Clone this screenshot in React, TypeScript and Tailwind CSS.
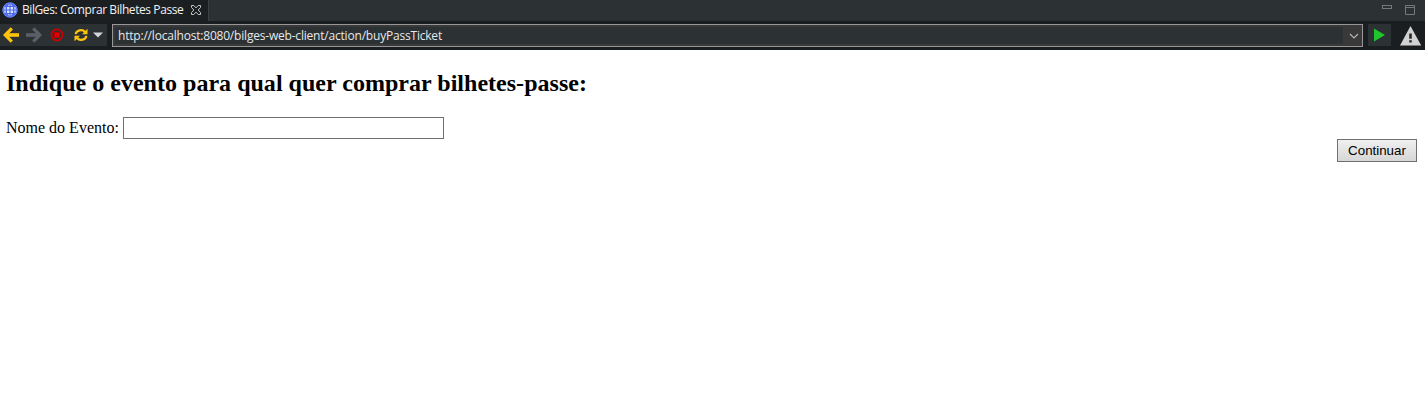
import React from "react";

function GlobeIcon() {
  return (
    <svg width="16" height="16" viewBox="0 0 16 16" className="shrink-0">
      <circle cx="8" cy="8" r="7.5" fill="#4c69ee" />
      <g fill="#d9e3ff">
        <path d="M5 5h2.400v2.400H5zM8.600 5H11v2.400H8.600zM5 8.600h2.400V11H5zM8.600 8.600H11V11H8.600z" />
        <path d="M5.500 3.800 7.400 2v1.800zM10.500 3.800 8.600 2v1.800zM5.500 12.200 7.400 14v-1.800zM10.500 12.200 8.600 14v-1.800z" />
      </g>
      <g fill="#a9bdfb">
        <path d="M2.400 5h1.500v2.400H1.800zM13.600 5h-1.500v2.400h2.100zM2.400 11h1.500V8.600H1.800zM13.600 11h-1.500V8.600h2.100z" />
      </g>
      <circle cx="8" cy="8" r="7.100" fill="none" stroke="#6d88f8" strokeWidth="1" />
    </svg>
  );
}

function CloseIcon() {
  return (
    <svg width="12" height="12" viewBox="0 0 12 12" className="shrink-0" fill="none" stroke="#c4c7c9" strokeWidth="1">
      <path d="M1.500 1.500h2.300L6 3.900l2.200-2.400h2.300v2L8.100 6l2.400 2.500v2H8.200L6 8.100l-2.200 2.400H1.500v-2L3.900 6 1.500 3.500z" />
    </svg>
  );
}

function Arrow({ className }: { className: string }) {
  return (
    <svg width="16" height="16" viewBox="0 0 16 16" className={className} fill="none" stroke="currentColor">
      <path d="M8.800 1.400 2.200 8l6.600 6.600" strokeWidth="3.200" />
      <path d="M2.500 8H16" strokeWidth="3.600" />
    </svg>
  );
}

function StopIcon() {
  return (
    <svg width="14" height="14" viewBox="0 0 14 14">
      <circle cx="7" cy="7" r="5.600" fill="none" stroke="#cc0000" strokeWidth="1.700" />
      <rect x="4" y="4" width="6" height="6" fill="#b80000" />
      <rect x="5" y="5" width="4" height="4" fill="#e60000" />
    </svg>
  );
}

function RefreshIcon() {
  return (
    <svg width="14" height="14" viewBox="0 0 14 14" fill="#fdc30a">
      <path d="M1.700 6.200C2.200 2 8.500.8 11 4M12.300 7.800C11.800 12 5.500 13.200 3 10" fill="none" stroke="#fdc30a" strokeWidth="2.200" />
      <path d="M13.500.7v5.600H8zM.5 13.300V7.700H6z" />
    </svg>
  );
}

function TabBar() {
  return (
    <div className="flex h-[21px] bg-[#2c3134]">
      <div className="flex h-[21px] w-[209px] items-center border-r border-[#3b4043] bg-[#1b1f22] pb-px pl-[2px]">
        <GlobeIcon />
        <span className="ml-1 w-[168px] whitespace-nowrap text-[12px] leading-[20px] tracking-[-0.42px] text-[#f2f2f2]">
          BilGes: Comprar Bilhetes Passe
        </span>
        <CloseIcon />
      </div>
      <div className="ml-auto flex pr-[9px]">
        <svg width="34" height="20" viewBox="0 0 34 20" fill="none" stroke="#74797c">
          <rect x=".5" y="5.500" width="9" height="3" />
          <path d="M23.500 5.500h9v9h-9zM23.500 7.500h9" />
        </svg>
      </div>
    </div>
  );
}

function Toolbar() {
  return (
    <div className="flex h-[29px] bg-[#1b1e20] pt-[3px]">
      <div className="flex h-[22px] w-[107px] items-center bg-[#2c3134] pl-[3px]">
        <Arrow className="text-[#ffc40a]" />
        <Arrow className="ml-[7px] rotate-180 text-[#5a5f68]" />
        <span className="ml-2"><StopIcon /></span>
        <span className="ml-[10px]"><RefreshIcon /></span>
        <svg width="10" height="6" viewBox="0 0 10 6" className="ml-[5px]">
          <path d="M0 .5h10L5 5.500z" fill="#d2d5d8" />
        </svg>
      </div>
      <div className="ml-[5px] flex h-[23px] w-[1251px] items-center border border-[#979797] bg-[#393939] p-[2px]">
        <div className="flex h-[17px] flex-1 items-center bg-[#2c3134] pl-[3px]">
          <span className="whitespace-nowrap text-[12px] leading-[17px] tracking-[-0.2px] text-[#e8e8e8]">
            http://localhost:8080/bilges-web-client/action/buyPassTicket
          </span>
        </div>
        <svg width="17" height="17" viewBox="0 0 17 17" fill="none" stroke="#b4b4b4" strokeWidth="1.200">
          <path d="m7 7 4 4 4-4" />
        </svg>
      </div>
      <div className="ml-[5px] flex h-[22px] w-[23px] items-center bg-[#2c3134] pl-[6px]">
        <svg width="11" height="14" viewBox="0 0 11 14">
          <path d="M0 .5 11 7 0 13.500z" fill="#20c42c" />
        </svg>
      </div>
      <svg width="22" height="20" viewBox="0 0 22 20" className="ml-[9px] mt-[2px]">
        <path d="M10.500 0 21.200 19.500H0z" fill="#d2d2d2" />
        <path d="M9.200 7.500h2.600v5.300H9.200zM9.200 14.200h2.600v2.300H9.200z" fill="#24282b" />
      </svg>
    </div>
  );
}

export default function App() {
  return (
    <div className="flex h-[416px] w-[1425px] flex-col overflow-hidden bg-white font-['Open_Sans',sans-serif]">
      <TabBar />
      <Toolbar />
      <main className="flex flex-col pl-[6px] pr-2 font-['Liberation_Serif',serif] text-black">
        <h2 className="mt-5 text-[24px] font-bold leading-[27px] tracking-[0.02px]">
          Indique o evento para qual quer comprar bilhetes-passe:
        </h2>
        <div className="mt-5 flex h-[22px] items-center">
          <label htmlFor="evento" className="w-[117px] whitespace-nowrap text-[16px] leading-[22px]">Nome do Evento:</label>
          <input id="evento" type="text" className="h-[22px] w-[321px] border border-[#6f6f6f] bg-white px-1 outline-none" />
        </div>
        <button className="h-[23px] w-[80px] self-end border border-[#707070] bg-linear-to-b from-[#f0f0f0] to-[#d6d6d6] text-center font-['Liberation_Sans',sans-serif] text-[13.333px] leading-[21px]">
          Continuar
        </button>
      </main>
    </div>
  );
}
